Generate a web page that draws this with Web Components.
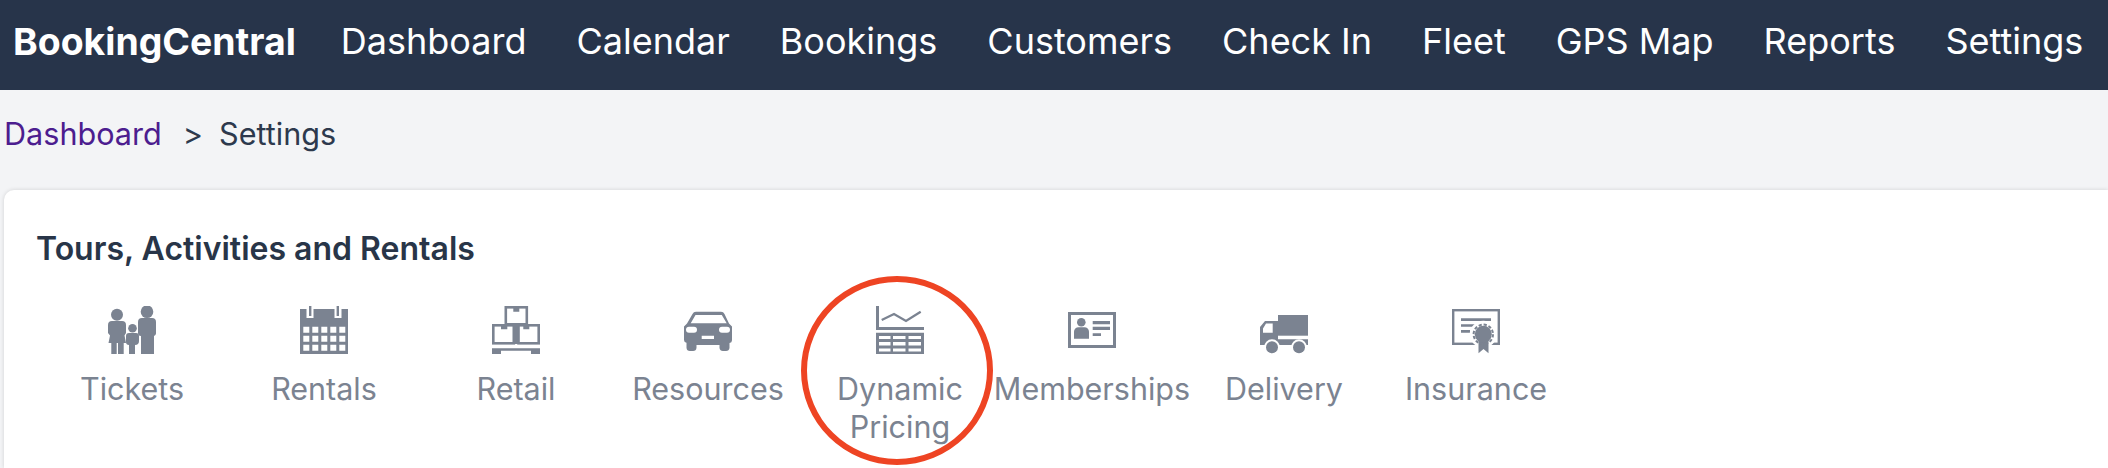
<!DOCTYPE html>
<html lang="en"><head><meta charset="utf-8"><title>BookingCentral</title>
<style>
html,body{margin:0;height:100%;overflow:hidden;background:#f3f4f6;font-family:Inter,"Liberation Sans",sans-serif}
</style></head><body>
<app-nav>
  <span slot="brand">BookingCentral</span>
  <nav-link>Dashboard</nav-link><nav-link>Calendar</nav-link><nav-link>Bookings</nav-link><nav-link>Customers</nav-link><nav-link>Check In</nav-link><nav-link>Fleet</nav-link><nav-link>GPS Map</nav-link><nav-link>Reports</nav-link><nav-link>Settings</nav-link>
</app-nav>
<bread-crumb><a slot="link">Dashboard</a><span slot="sep">&gt;</span>Settings</bread-crumb>
<settings-card>
  <span slot="title">Tours, Activities and Rentals</span>
  <icon-item label="Tickets"><svg viewBox="0 0 48 48"><circle cx="9" cy="8.7" r="6"/><path d="M4 15h10a4 4 0 0 1 4 4v8l-1.500 2.500 1.500 7.500h-2.300v11H10V37H8.700v11H3.300V37H.5L2 29.500 0 27v-8a4 4 0 0 1 4-4z"/><circle cx="39" cy="5.700" r="6.300"/><path d="M34 12h10a4 4 0 0 1 4 4v11a3 3 0 0 1-2 3v18H33V30a3 3 0 0 1-3-3V16a4 4 0 0 1 4-4z"/><circle cx="24.500" cy="22.300" r="4.300"/><path d="M21 27h7a3 3 0 0 1 3 3v5a4 4 0 0 1-4 4v9h-6v-9a3 3 0 0 1-3-3v-6a3 3 0 0 1 3-3z"/></svg></icon-item>
  <icon-item label="Rentals"><svg viewBox="0 0 48 48"><path fill-rule="evenodd" d="M0 3h48v45H0zM3.300 20.700v6h6v-6zm9 0v6h6v-6zm9 0v6h6v-6zm9 0v6h6v-6zm9 0v6h6v-6zm-36 9v6h6v-6zm9 0v6h6v-6zm9 0v6h6v-6zm9 0v6h6v-6zm9 0v6h6v-6zm-36 9v6h6v-6zm9 0v6h6v-6zm9 0v6h6v-6zm9 0v6h6v-6zm9 0v6h6v-6z"/><rect x="6.500" y="0" width="7" height="12" fill="#fff"/><rect x="34.500" y="0" width="7" height="12" fill="#fff"/><rect x="9" y="0" width="2.400" height="10"/><rect x="36.600" y="0" width="2.400" height="10"/></svg></icon-item>
  <icon-item label="Retail"><svg viewBox="0 0 48 48"><g fill="none" stroke-width="2.600"><rect x="13.800" y="1.300" width="21" height="17"/><rect x="1.300" y="19.300" width="20.500" height="18"/><rect x="26.500" y="19.300" width="20.200" height="18"/></g><rect x="21" y="18" width="5.500" height="20"/><path d="M21.300 2h6v3.700h-6zM9 20h6.300v3.300H9zM31.300 20h6v3.300h-6z"/><path d="M0 42.300h48V48h-9v-3.300H9V48H0z"/></svg></icon-item>
  <icon-item label="Resources"><svg viewBox="0 0 48 48"><path fill-rule="evenodd" d="M12 5.700h25a4 4 0 0 1 3.500 2.300L45 17.500l3 3v13.500a3 3 0 0 1-2.500 3v5a3.500 3.500 0 0 1-3.500 3h-3a3.500 3.500 0 0 1-3.500-3V39h-23v2.800A3.500 3.500 0 0 1 9 45H6a3.500 3.500 0 0 1-3.500-3.200v-5A3 3 0 0 1 0 34V20.500l3-3L8.500 8A4 4 0 0 1 12 5.700zM11.500 9 6.700 17.300h36L37.800 9zM5 20.700a2 2 0 0 0 0 6h5a2.500 2.500 0 0 0 0-6zm33 0a3 3 0 0 0 0 6h5a2.500 2.500 0 0 0 0-6zM17.700 29.700V33H30v-3.300z"/></svg></icon-item>
  <icon-item label="Dynamic Pricing"><svg viewBox="0 0 48 48"><path d="M0 0h3v21h45v3H0z"/><path d="M5.700 14 18 8l12 7 14.700-9.300" fill="none" stroke-width="2.300"/><path fill-rule="evenodd" d="M0 26.700h48V48H0zM3 30v3h11.500v-3zm14 0v3h12.500v-3zm15.500 0v3H45v-3zM3 36v3.500h11.500V36zm14 0v3.500h12.500V36zm15.500 0v3.500H45V36zM3 42.500v3h11.500v-3zm14 0v3h12.500v-3zm15.500 0v3H45v-3z"/></svg></icon-item>
  <icon-item label="Memberships"><svg viewBox="0 0 48 48"><rect x="1.500" y="7.500" width="45" height="33" fill="none" stroke-width="3"/><circle cx="13.300" cy="16.300" r="4.300"/><path d="M6 32.700v-7a4.500 4.500 0 0 1 4.500-4.500h6a4.500 4.500 0 0 1 4.500 4.500v7z"/><path d="M24.700 15H42v3.300H24.700zM24.700 20.700H42V24H24.700zM24.700 27.300H33V30h-8.300z"/></svg></icon-item>
  <icon-item label="Delivery"><svg viewBox="0 0 48 48"><rect x="18" y="9" width="30" height="20.700"/><path fill-rule="evenodd" d="M5 15h13v18.300h30V39H0V21zM6 17.500 3 22.500v4.200h9.700v-9.200z"/><circle cx="12" cy="41.300" r="8" fill="#fff"/><circle cx="39" cy="41.300" r="8" fill="#fff"/><circle cx="12" cy="41.300" r="6"/><circle cx="39" cy="41.300" r="6"/></svg></icon-item>
  <icon-item label="Insurance"><svg viewBox="0 0 48 48"><rect x="1.200" y="4.200" width="45.600" height="33.600" fill="none" stroke-width="2.400"/><path d="M9 12.300h30V15H9zM9 18.300h18v2.400H9zM9 24h9v2.700H9z"/><circle cx="31.300" cy="28.300" r="13.500" fill="#fff"/><path d="M26.500 33h10v14.300L31.500 43l-5 4.300z"/><circle cx="31.300" cy="28.300" r="8.500"/><circle cx="31.300" cy="28.300" r="9.700" fill="none" stroke-width="2" stroke-dasharray="3.200 1.880"/></svg></icon-item>
  <ring-mark slot="overlay"></ring-mark>
</settings-card>
<script>
function def(name,html){customElements.define(name,class extends HTMLElement{constructor(){super();this.attachShadow({mode:'open'}).innerHTML=html;}});}
def('app-nav',`<style>:host{display:flex;align-items:center;height:90px;background:#27344a;color:#fff;padding:0 0 8px 13px;box-sizing:border-box;overflow:hidden;white-space:nowrap;font-size:36px}
.brand{font-weight:700;font-size:37.400px;margin-right:45px}.links{display:flex;gap:50px}</style><div class="brand"><slot name="brand"></slot></div><div class="links"><slot></slot></div>`);
def('nav-link',`<style>:host{display:block;font-weight:400}</style><slot></slot>`);
def('bread-crumb',`<style>:host{display:flex;align-items:center;height:100px;padding:0 0 14px 4px;box-sizing:border-box;font-size:30.600px;color:#2d394d}
::slotted([slot=link]){color:#4c1d8f}::slotted([slot=sep]){margin:0 16px 0 21px}</style><slot name="link"></slot><slot name="sep"></slot><slot></slot>`);
def('settings-card',`<style>:host{display:block;position:relative;margin-left:4px;background:#fff;border-radius:10px 0 0 0;box-shadow:0 0 4px rgba(0,0,0,.14);padding:39px 0 0 32px;height:278px;box-sizing:border-box}
h2{margin:0 0 37px;font-size:32px;line-height:40px;font-weight:600;color:#283548}.grid{display:grid;grid-template-columns:repeat(8,192px)}</style>
<h2><slot name="title"></slot></h2><div class="grid"><slot></slot></div><slot name="overlay"></slot>`);
customElements.define('icon-item',class extends HTMLElement{constructor(){super();const r=this.attachShadow({mode:'open'});r.innerHTML=`<style>:host{display:flex;flex-direction:column;align-items:center;color:#7b8391;font-size:30.500px;line-height:38px}
::slotted(svg){width:48px;height:48px;fill:#7b8391;stroke:#7b8391;stroke-width:0;display:block}.l{margin-top:16px;width:min-content;text-align:center}</style><slot></slot><div class="l"></div>`;r.querySelector('.l').textContent=this.getAttribute('label');}});
def('ring-mark',`<style>:host{position:absolute;left:797px;top:86px;width:192px;height:189px;box-sizing:border-box;border:6px solid #ee4423;border-radius:50%;pointer-events:none}</style>`);
</script>
</body></html>
